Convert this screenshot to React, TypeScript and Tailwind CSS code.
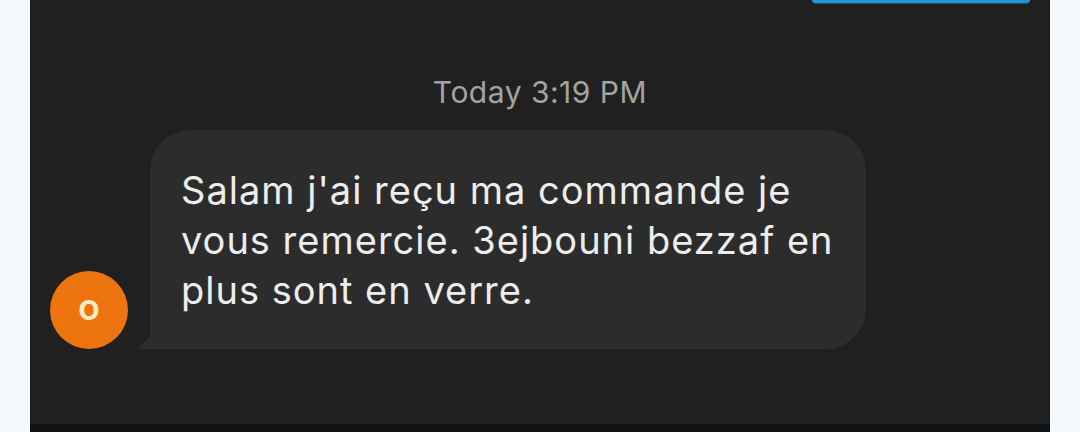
import type React from "react";

const message = [
  "Salam j'ai reçu ma commande je",
  "vous remercie. 3ejbouni bezzaf en",
  "plus sont en verre.",
];

const Avatar: React.FC<{ letter: string }> = ({ letter }) => (
  <div className="w-[78px] h-[78px] shrink-0 rounded-full bg-[#ee7410] flex items-center justify-center">
    <span className="text-[#fde9c4] text-[36px] font-semibold leading-none mt-[-7px]">
      {letter}
    </span>
  </div>
);

const Bubble: React.FC<{ lines: string[] }> = ({ lines }) => (
  <div className="relative ml-[22px]">
    <svg
      className="absolute left-[-12px] bottom-0"
      width="14"
      height="16"
      viewBox="0 0 14 16"
    >
      <path d="M14 0 L14 16 L2 16 Q0 16 2 13 Q10 7 14 0 Z" fill="#2c2c2c" />
    </svg>
    <div className="w-[716px] h-[219px] bg-[#2c2c2c] rounded-[40px] rounded-bl-none pl-[31px] pt-[35px] text-[38px] leading-[50px] tracking-[1px] text-[#ededed] whitespace-nowrap">
      {lines.map((line) => (
        <div key={line}>{line}</div>
      ))}
    </div>
  </div>
);

export default function App() {
  return (
    <div
      className="w-[1080px] h-[432px] bg-[#f5f9fd] flex overflow-hidden"
      style={{ fontFamily: "Inter, Roboto, sans-serif" }}
    >
      <div className="ml-[30px] w-[1020px] h-full bg-[#202020] flex flex-col">
        <div className="flex justify-end pr-[20px]">
          <div className="w-[218px] h-[4px] bg-[#1e97cc] rounded-b-[6px] border-b border-[#15506a]" />
        </div>
        <div className="mt-[68px] text-center text-[30px] leading-[40px] tracking-[0.5px] text-[#a3a3a3]">
          Today 3:19 PM
        </div>
        <div className="mt-[18px] flex items-end pl-[20px]">
          <Avatar letter="o" />
          <Bubble lines={message} />
        </div>
        <div className="flex-1" />
        <div className="h-[8px] bg-[#0e1215]" />
      </div>
    </div>
  );
}
